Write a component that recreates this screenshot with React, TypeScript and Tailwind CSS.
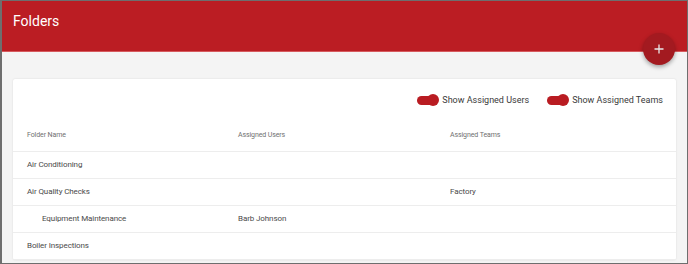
import React from "react";

function Toggle({ label }: { label: string }) {
  return (
    <div className="flex items-center">
      <div className="relative w-[22px] h-[12px] flex items-center">
        <div className="w-[21px] h-[9px] rounded-full bg-[#b91c22]" />
        <div className="absolute right-0 top-0 w-[12px] h-[12px] rounded-full bg-[#b91c22]" />
      </div>
      <span className="ml-[3px] text-[9px] leading-none text-[#3a3a3a]">{label}</span>
    </div>
  );
}

const rows = [
  { name: "Air Conditioning", users: "", teams: "", indent: false },
  { name: "Air Quality Checks", users: "", teams: "Factory", indent: false },
  { name: "Equipment Maintenance", users: "Barb Johnson", teams: "", indent: true },
  { name: "Boiler Inspections", users: "", teams: "", indent: false },
];

export default function App() {
  return (
    <div
      className="relative w-[688px] h-[264px] overflow-hidden bg-[#f4f4f4] border border-[#6e6e6e] border-l-2"
      style={{ fontFamily: "Roboto, 'Liberation Sans', sans-serif" }}
    >
      <div className="h-[51px] bg-[#bb1d23] border-b border-[#d65a5e] px-[11px] pt-[10px]">
        <h1 className="text-[14px] leading-[20px] text-white">Folders</h1>
      </div>
      <button className="absolute left-[641px] top-[32px] w-[32px] h-[32px] rounded-full bg-[#a31a20] text-white flex items-center justify-center shadow-[0_2px_4px_rgba(0,0,0,0.35)]">
        <svg width="10" height="10" viewBox="0 0 10 10">
          <path d="M5 0.5V9.5M0.5 5H9.5" stroke="#e8e8e8" strokeWidth="1.3" />
        </svg>
      </button>
      <div className="px-[11px] pt-[27px]">
        <div className="bg-white rounded-[2px] shadow-[0_0_2px_rgba(0,0,0,0.12)] pt-[14px]">
          <div className="flex justify-end gap-[18px] pr-[13px] h-[14px] items-center">
            <Toggle label="Show Assigned Users" />
            <Toggle label="Show Assigned Teams" />
          </div>
          <div className="mt-[13px] h-[32px] flex items-center border-b border-[#ededed] pl-[14px] text-[7px] tracking-[-0.1px] text-[#707070]">
            <div className="w-[211px]">Folder Name</div>
            <div className="w-[212px]">Assigned Users</div>
            <div>Assigned Teams</div>
          </div>
          {rows.map((r) => (
            <div
              key={r.name}
              className="h-[27px] flex items-center border-b border-[#ededed] pl-[14px] text-[8px] tracking-[-0.1px] text-[#4a4a4a]"
            >
              <div className={"w-[211px] " + (r.indent ? "pl-[15px]" : "")}>{r.name}</div>
              <div className="w-[212px]">{r.users}</div>
              <div>{r.teams}</div>
            </div>
          ))}
        </div>
      </div>
    </div>
  );
}
